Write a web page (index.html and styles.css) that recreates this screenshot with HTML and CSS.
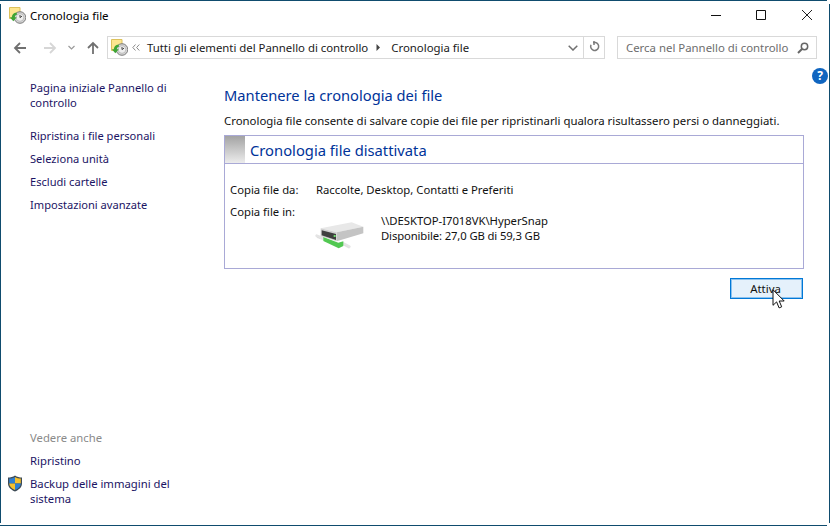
FILE: index.html
```html
<!DOCTYPE html>
<html lang="it">
<head>
<meta charset="utf-8">
<title>Cronologia file</title>
<link rel="stylesheet" href="styles.css">
</head>
<body>
<svg class="defs" width="0" height="0" aria-hidden="true">
  <defs>
    <symbol id="fh" viewBox="0 0 17 17">
      <path d="M.5.500h10.500v11H.5z" fill="#fde68f" stroke="#dcc15c"/>
      <circle cx="11" cy="10.500" r="5.800" fill="#d4d4d4" stroke="#7b7b7b"/>
      <circle cx="11" cy="10.500" r="3.800" fill="#eeeeee" stroke="#a8a8a8" stroke-width=".6"/>
      <path d="M11 8v2.600l2-1.500" fill="none" stroke="#444" stroke-width="1"/>
      <path d="M7.500 5.500c-3 .4-4.500 2.300-4.700 4.800H.8l3.500 4 3.500-4H5.600c.1-1.400.9-2.300 2.400-2.600z" fill="#3fa535"/>
    </symbol>
  </defs>
</svg>
<div class="window">
  <header class="titlebar">
    <svg class="ico16" width="17" height="17"><use href="#fh"/></svg>
    <span class="title">Cronologia file</span>
    <div class="controls">
      <svg class="ctl-min" width="12" height="12" viewBox="0 0 12 12"><path d="M1 6.500h10" stroke="#111" fill="none"/></svg>
      <svg width="12" height="12" viewBox="0 0 12 12"><path d="M1.500 1.500h9v9h-9z" stroke="#111" fill="none"/></svg>
      <svg width="12" height="12" viewBox="0 0 12 12"><path d="M1 1l10 10M11 1L1 11" stroke="#222" fill="none"/></svg>
    </div>
  </header>

  <nav class="navbar">
    <div class="navbtns">
      <svg width="14" height="14" viewBox="0 0 14 14"><path d="M13 7H2M7 2L2 7l5 5" fill="none" stroke="#707070" stroke-width="1.800"/></svg>
      <svg class="next" width="14" height="14" viewBox="0 0 14 14"><path d="M1 7h11M7 2l5 5-5 5" fill="none" stroke="#d6d6d6" stroke-width="1.800"/></svg>
      <svg class="drop" width="7" height="5" viewBox="0 0 7 5"><path d="M.5 1l3 3 3-3" fill="none" stroke="#9a9a9a" stroke-width="1.200"/></svg>
      <svg class="up" width="14" height="14" viewBox="0 0 14 14"><path d="M7 13V2M2 7l5-5 5 5" fill="none" stroke="#707070" stroke-width="1.800"/></svg>
    </div>
    <div class="address">
      <svg width="17" height="17"><use href="#fh"/></svg>
      <svg class="chev" width="8" height="7" viewBox="0 0 8 7"><path d="M3.500.5L.8 3.500l2.700 3M7.300.5L4.600 3.500l2.700 3" fill="none" stroke="#8a8a8a"/></svg>
      <span class="crumb">Tutti gli elementi del Pannello di controllo</span>
      <svg class="sep" width="5" height="7" viewBox="0 0 5 7"><path d="M.5 0L4 3.500.5 7z" fill="#444"/></svg>
      <span class="crumb2">Cronologia file</span>
      <svg class="addrdrop" width="10" height="6" viewBox="0 0 10 6"><path d="M.7.700L5 5 9.300.7" fill="none" stroke="#707070" stroke-width="1.500"/></svg>
      <div class="refresh">
        <svg width="12" height="13" viewBox="0 0 12 13"><path d="M5 1.500h2.500A4 4 0 1 1 3 3.800" fill="none" stroke="#7a7a7a" stroke-width="1.500"/><path d="M6 0v4" stroke="#7a7a7a" stroke-width="1.500"/></svg>
      </div>
    </div>
    <div class="search">
      <span>Cerca nel Pannello di controllo</span>
      <svg width="12" height="12" viewBox="0 0 12 12"><circle cx="7.500" cy="4.500" r="3.200" fill="none" stroke="#666" stroke-width="1.500"/><path d="M5 7l-4 4" stroke="#666" stroke-width="2"/></svg>
    </div>
  </nav>

  <div class="content">
    <aside class="sidebar">
      <ul class="links">
        <li class="first">Pagina iniziale Pannello di controllo</li>
        <li class="restore">Ripristina i file personali</li>
        <li>Seleziona unità</li>
        <li>Escludi cartelle</li>
        <li>Impostazioni avanzate</li>
      </ul>
      <div class="also">
        <div class="also-h">Vedere anche</div>
        <div class="also-l">Ripristino</div>
        <div class="also-l">
          <svg class="shield" width="16" height="17" viewBox="0 0 16 17">
            <path d="M8 .5c2 1.500 4.500 2 7 2v6c0 4-3.500 6.500-7 8-3.500-1.500-7-4-7-8v-6c2.500 0 5-.5 7-2z" fill="#3d4a55"/>
            <path d="M8 2v6.500H2.200V3.500C4.200 3.500 6.300 3 8 2z" fill="#2f7fd0"/>
            <path d="M8 2c1.700 1 3.800 1.500 5.800 1.500v5H8z" fill="#f5c12e"/>
            <path d="M2.200 8.500H8v6.500C5 13.800 2.400 11.800 2.200 8.500z" fill="#f5c12e"/>
            <path d="M8 8.500h5.800c-.2 3.300-2.800 5.300-5.800 6.500z" fill="#2f7fd0"/>
          </svg>
          Backup delle immagini del sistema
        </div>
      </div>
    </aside>

    <main class="main">
      <h1 class="heading">Mantenere la cronologia dei file</h1>
      <p class="desc">Cronologia file consente di salvare copie dei file per ripristinarli qualora risultassero persi o danneggiati.</p>
      <section class="panel">
        <div class="panel-head">
          <div class="swatch"></div>
          <h2 class="panel-title">Cronologia file disattivata</h2>
        </div>
        <div class="panel-body">
          <div class="row"><span class="lbl">Copia file da:</span><span>Raccolte, Desktop, Contatti e Preferiti</span></div>
          <div class="row row2">
            <span class="lbl">Copia file in:</span>
            <svg class="drive" width="50" height="36" viewBox="15 9 150 108">
              <path d="M20 62l20 8M100 85l18 10" stroke="#e4e4e4" stroke-width="8" stroke-linecap="round"/>
              <path d="M20 62l20 8M100 85l18 10" stroke="#b4b4b4" stroke-width="1" transform="translate(0 5)"/>
              <path d="M40 66l45 17 15-4v14l-14 7-46-22z" fill="#52c852"/>
              <path d="M32 40L125 22l35 13-80 17z" fill="#e8e8e8"/>
              <path d="M32 40l48 12v27L32 63z" fill="#d0d0d0"/>
              <path d="M35 46l43 11v18L35 61z" fill="#3f3f3f"/>
              <path d="M80 52l80-17v20L80 79z" fill="#c4c4c4"/>
              <rect x="71" y="60" width="6" height="6" fill="#6fdc6f"/>
            </svg>
            <div class="dest">
              <div class="dest-path">\\DESKTOP-I7018VK\HyperSnap</div>
              <div class="dest-free">Disponibile: 27,0 GB di 59,3 GB</div>
            </div>
          </div>
        </div>
      </section>
      <div class="actions">
        <button class="btn" type="button">Attiva</button>
        <svg class="cursor" width="13" height="20" viewBox="0 0 13 20"><path d="M1 .8v15.500l3.600-3.400 2.500 6 2.600-1.100-2.500-5.800h5z" fill="#fff" stroke="#111"/></svg>
      </div>
    </main>

    <div class="help">?</div>
  </div>
</div>
</body>
</html>
```

FILE: styles.css
```css
* { box-sizing: border-box; }
html, body { margin: 0; padding: 0; }
body {
  width: 831px;
  height: 527px;
  background: #fff;
  overflow: hidden;
  font-family: "Noto Sans", "Open Sans", sans-serif;
  font-size: 11.4px;
  color: #1a1a1a;
}
.defs { position: absolute; }
.window {
  position: relative;
  width: 831px;
  height: 527px;
  display: flex;
  flex-direction: column;
}
.window::before {
  content: "";
  position: absolute;
  left: 0;
  top: 0;
  width: 827px;
  height: 1px;
  background: #0f4c6e;
  box-shadow: 0 525px 0 #0f4c6e;
}
.window::after {
  content: "";
  position: absolute;
  left: 0;
  top: 4px;
  width: 1px;
  height: 519px;
  background: #0f4c6e;
  box-shadow: 829px 0 0 #0f4c6e;
}
.titlebar {
  height: 31px;
  flex: none;
  display: flex;
  align-items: center;
  padding: 0 0 0 9px;
}
.title { margin-left: 4px; font-size: 11.5px; color: #000; }
.controls {
  margin-left: auto;
  margin-top: -1px;
  display: flex;
  gap: 33px;
  padding-right: 18px;
  align-items: center;
}
.controls svg + svg + svg { margin-left: 1px; }
.navbar {
  height: 23px;
  margin-top: 5px;
  flex: none;
  display: flex;
  align-items: center;
  padding-right: 14px;
}
.navbtns {
  width: 107px;
  flex: none;
  display: flex;
  align-items: center;
  padding-left: 13px;
}
.next { margin-left: 16px; }
.drop { margin-left: 11px; }
.up { margin-left: 11px; }
.address {
  width: 498px;
  height: 23px;
  flex: none;
  border: 1px solid #d9d9d9;
  display: flex;
  align-items: center;
  padding-left: 3px;
}
.chev { margin-left: 4px; }
.crumb { margin-left: 7px; letter-spacing: -0.02px; }
.sep { margin-left: 8px; }
.crumb2 { margin-left: 10px; }
.addrdrop { margin-left: auto; margin-right: 5px; }
.refresh {
  width: 21px;
  height: 21px;
  border-left: 1px solid #d9d9d9;
  display: flex;
  align-items: center;
  justify-content: center;
  flex: none;
}
.search {
  margin-left: 12px;
  flex: 1;
  height: 23px;
  border: 1px solid #d9d9d9;
  display: flex;
  align-items: center;
  justify-content: space-between;
  padding: 0 7px 0 8px;
  color: #6d6d6d;
}
.content {
  position: relative;
  flex: 1;
  display: flex;
  min-height: 0;
}
.sidebar {
  width: 224px;
  flex: none;
  padding: 21px 30px 21px 30px;
  display: flex;
  flex-direction: column;
  justify-content: space-between;
  color: #1b1464;
  line-height: 15px;
}
.links { list-style: none; margin: 0; padding: 0; font-size: 11.1px; }
.links li { margin-top: 8px; }
.links li.first { margin-top: 0; font-size: 11.2px; }
.links li.restore { margin-top: 18px; }
.also { font-size: 11.3px; }
.also-h { color: #8a8a8a; }
.also-l { margin-top: 8px; position: relative; }
.shield { position: absolute; left: -23px; top: -1px; }
.main { flex: none; width: 580px; padding-top: 26px; }
.heading {
  margin: 0;
  font-size: 14.7px;
  font-weight: 400;
  line-height: 20px;
  color: #003399;
}
.desc { margin: 8px 0 0; line-height: 16px; color: #111; font-size: 11.4px; }
.panel {
  margin-top: 6px;
  height: 134px;
  border: 1px solid #a9a9d6;
}
.panel-head {
  height: 28px;
  border-bottom: 1px solid #a9a9d6;
  display: flex;
  align-items: stretch;
}
.swatch {
  width: 20px;
  background: linear-gradient(#a3a3a3, #ececec);
}
.panel-title {
  margin: 0 0 0 5px;
  font-size: 14.75px;
  font-weight: 400;
  line-height: 29px;
  color: #003399;
}
.panel-body { padding: 18px 5px 0; color: #111; line-height: 16px; font-size: 11.3px; }
.row { display: flex; }
.row2 { margin-top: 6px; position: relative; }
.lbl { width: 86px; flex: none; }
.drive { margin: 14px 0 0 -1px; flex: none; }
.dest { margin-left: 16px; margin-top: 9px; line-height: 15px; }
.dest-path { letter-spacing: -0.03px; }
.dest-free { letter-spacing: -0.13px; }
.actions {
  position: relative;
  display: flex;
  justify-content: flex-end;
  margin-top: 9px;
  padding-right: 1px;
}
.btn {
  width: 73px;
  height: 21px;
  padding: 0 2px 0 0;
  background: #e5f1fb;
  border: 1px solid #0078d7;
  box-shadow: inset 0 0 0 1px #8cc2ee;
  font: inherit;
  color: #111;
}
.cursor { position: absolute; left: 548px; top: 11px; }
.help {
  position: absolute;
  left: 812px;
  top: 9px;
  width: 16px;
  height: 16px;
  border-radius: 50%;
  background: #0f65c0;
  color: #fff;
  font-weight: 700;
  font-size: 12px;
  line-height: 16px;
  text-align: center;
}
```
